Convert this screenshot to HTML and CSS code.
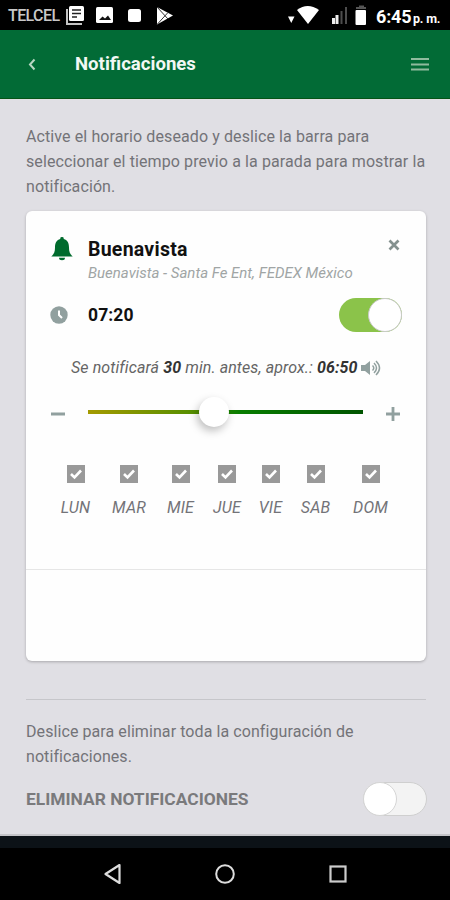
FILE: index.html
```html
<!DOCTYPE html>
<html lang="es">
<head>
<meta charset="utf-8">
<title>Notificaciones</title>
<link rel="stylesheet" href="styles.css">
</head>
<body>
<div class="phone">
  <div class="status">
    <span class="carrier">TELCEL</span>
    <svg class="status-left" width="110" height="30" viewBox="0 0 110 30">
      <path d="M2 9v15h15" fill="none" stroke="#c4c4c4" stroke-width="2"/>
      <rect x="4" y="6" width="15" height="15" rx="1.5" fill="#fff"/>
      <path d="M7 10h9M7 13.5h9M7 17h5" stroke="#222" stroke-width="1.5"/>
      <rect x="31" y="7" width="17" height="16" rx="1.5" fill="#fff"/>
      <path d="M34 20l3.500-3.500 2.500 2 3-3 3 4.500z" fill="#111"/>
      <rect x="63" y="9" width="13" height="13" rx="2.500" fill="#fff"/>
      <path d="M92 7l16 8.500-16 9z" fill="#fff"/>
      <path d="M92 7l11 12M92 24.500l11-12" stroke="#333" stroke-width="1"/>
    </svg>
    <svg class="status-right" width="84" height="30" viewBox="0 0 84 30">
      <path d="M2 16.500h6.500l-3.250 6.500z" fill="#fff"/>
      <path d="M11 10q10.500-8 22 0L22 24z" fill="#fff"/>
      <path d="M47.500 24v-6M51 24v-9" stroke="#eee" stroke-width="3"/>
      <path d="M55.500 24V11M60 24V7" stroke="#4d4d4d" stroke-width="2"/>
      <path d="M70 9V7h3V5.500h5V7h2v2z" fill="#555"/>
      <rect x="69.500" y="10" width="10.500" height="15" rx="1" fill="#fff"/>
    </svg>
    <span class="clock">6:45</span><span class="ampm">p. m.</span>
  </div>
  <header class="bar">
    <svg class="back" width="10" height="14" viewBox="0 0 10 14"><path d="M7.500 2.500L3 7.500 7.500 12.500" fill="none" stroke="#b9d6c3" stroke-width="2"/></svg>
    <h1>Notificaciones</h1>
    <svg class="menu" width="18" height="14" viewBox="0 0 18 14"><path d="M0 2h18M0 7.500h18M0 12.500h18" stroke="#8fbb9d" stroke-width="2"/></svg>
  </header>
  <main>
    <p class="intro">Active el horario deseado y deslice la barra para<br>seleccionar el tiempo previo a la parada para mostrar la<br>notificación.</p>
    <section class="card">
      <div class="stop">
        <svg class="bell" width="22" height="26" viewBox="0 0 22 26"><path d="M11 1a1.700 1.700 0 0 1 1.700 2C17 4 18 8 18 11.500c0 4.500 1 6.500 3.700 9H.3C3 18 4 16 4 11.500 4 8 5 4 9.300 3A1.700 1.700 0 0 1 11 1zM8 21.800h6a3 2.500 0 0 1-6 0z" fill="#006b2d"/></svg>
        <div class="names">
          <h2>Buenavista</h2>
          <div class="route">Buenavista - Santa Fe Ent, FEDEX México</div>
        </div>
        <svg class="close" width="12" height="12" viewBox="0 0 12 12"><path d="M1.500 1.500l9 9M10.500 1.500l-9 9" stroke="#84918f" stroke-width="2.700"/></svg>
      </div>
      <div class="time-row">
        <svg class="time-icon" width="18" height="18" viewBox="0 0 18 18"><circle cx="9" cy="9" r="8.700" fill="#91a09f"/><path d="M9 4.500V9l3 3" fill="none" stroke="#fff" stroke-width="2"/></svg>
        <span class="time">07:20</span>
        <div class="switch on"><i></i></div>
      </div>
      <div class="summary">
        <span>Se notificará <b>30</b> min. antes, aprox.: <b>06:50</b></span>
        <svg width="20" height="16" viewBox="0 0 20 16"><path d="M0 5h4l5-4v14l-5-4H0z" fill="#91a09f"/><path d="M11.500 5.500q2.500 2.500 0 5M13 3q5 5 0 10M15 1q7 7 0 14" fill="none" stroke="#91a09f" stroke-width="1.500"/></svg>
      </div>
      <div class="slider">
        <svg width="14" height="14" viewBox="0 0 14 14"><path d="M0 7h14" stroke="#91a09f" stroke-width="3"/></svg>
        <div class="track"><i class="thumb"></i></div>
        <svg width="14" height="14" viewBox="0 0 14 14"><path d="M0 7h14M7 0v14" stroke="#91a09f" stroke-width="2.800"/></svg>
      </div>
      <div class="days">
        <label><svg class="check" viewBox="0 0 18 18"><path d="M4 9l3.500 3.500L14 5.500"/></svg><span>LUN</span></label>
        <label><svg class="check" viewBox="0 0 18 18"><path d="M4 9l3.500 3.500L14 5.500"/></svg><span>MAR</span></label>
        <label><svg class="check" viewBox="0 0 18 18"><path d="M4 9l3.500 3.500L14 5.500"/></svg><span>MIE</span></label>
        <label><svg class="check" viewBox="0 0 18 18"><path d="M4 9l3.500 3.500L14 5.500"/></svg><span>JUE</span></label>
        <label><svg class="check" viewBox="0 0 18 18"><path d="M4 9l3.500 3.500L14 5.500"/></svg><span>VIE</span></label>
        <label><svg class="check" viewBox="0 0 18 18"><path d="M4 9l3.500 3.500L14 5.500"/></svg><span>SAB</span></label>
        <label><svg class="check" viewBox="0 0 18 18"><path d="M4 9l3.500 3.500L14 5.500"/></svg><span>DOM</span></label>
      </div>
      <div class="card-foot"></div>
    </section>
    <section class="remove">
      <p>Deslice para eliminar toda la configuración de<br>notificaciones.</p>
      <div class="remove-row">
        <strong>ELIMINAR NOTIFICACIONES</strong>
        <div class="switch off"><i></i></div>
      </div>
    </section>
  </main>
  <div class="strip"></div>
  <nav>
    <svg width="18" height="20" viewBox="0 0 18 20"><path d="M16.500 1v18L2.500 10z" fill="none" stroke="#ddd" stroke-width="2.200" stroke-linejoin="round"/></svg>
    <svg width="20" height="20" viewBox="0 0 20 20"><circle cx="10" cy="10" r="8.800" fill="none" stroke="#ddd" stroke-width="2"/></svg>
    <svg width="18" height="18" viewBox="0 0 18 18"><rect x="1.500" y="1.500" width="15" height="15" fill="none" stroke="#ccc" stroke-width="2.200"/></svg>
  </nav>
</div>
</body>
</html>
```
FILE: styles.css
```css
* { box-sizing: border-box; }
body, h1, h2, p { margin: 0; }
body { background: #000; font-family: Roboto, "Liberation Sans", sans-serif; font-size: 16px; color: #737378; }
svg { display: block; flex: none; }
.phone { width: 450px; height: 900px; overflow: hidden; display: flex; flex-direction: column; white-space: nowrap; }

.status { height: 30px; flex: none; display: flex; align-items: center; padding-left: 8px; color: #fff; background: #000; }
.carrier { width: 57px; padding-top: 1px; font-size: 16px; font-weight: 500; letter-spacing: -0.6px; color: #c8c8c8; }
.status-right { margin-left: 111px; }
.clock { margin-left: 6px; width: 37px; padding-top: 3px; font-size: 18px; font-weight: 700; letter-spacing: -0.2px; }
.ampm { padding-top: 7px; font-size: 12.5px; font-weight: 700; letter-spacing: -0.2px; }

.bar { height: 69px; flex: none; display: flex; align-items: center; padding: 0 21px 0 27px; background: #026b36; border-bottom: 1px solid #055417; }
.bar h1 { flex: 1; padding-left: 38px; font-size: 18.6px; font-weight: 700; color: #f2f8f4; }

main { height: 737px; flex: none; padding: 25px 24px 0 26px; background: #e0dfe4; border-bottom: 2px solid #c4c4c8; }
.intro { height: 87px; line-height: 25px; letter-spacing: 0.1px; }
.card { width: 400px; height: 450px; display: flex; flex-direction: column; padding: 26px 24px 0; border-radius: 6px; background: #fefefe; box-shadow: 0 1px 3px rgba(0,0,0,.25); }
.stop { display: flex; height: 60px; }
.bell { margin: -1px 0 0 1px; }
.names { flex: 1; padding-left: 15px; }
.stop h2 { font-size: 19.5px; line-height: 26px; font-weight: 700; letter-spacing: 0.25px; color: #111; }
.route { font-size: 15px; line-height: 20px; font-style: italic; color: #a0a5a5; }
.close { margin: 2px 2px 0 0; }
.time-row { height: 36px; display: flex; align-items: center; }
.time { flex: 1; padding-left: 20px; font-size: 17.5px; letter-spacing: 0.1px; font-weight: 700; color: #111; }
.switch { position: relative; width: 63px; height: 34px; border-radius: 17px; }
.switch i { position: absolute; top: 0; width: 34px; height: 34px; border: 1px solid #c9c9c9; border-radius: 50%; background: #fff; }
.on { background: #8bc34a; }
.on i { right: 0; }
.off { width: 64px; background: #f3f3f3; border: 1px solid #cfcfcf; }
.off i { left: -1px; top: -1px; border-color: #d5d5d5; }
.summary { height: 46px; padding: 24px 0 0 21px; display: flex; align-items: center; font-style: italic; line-height: 20px; letter-spacing: 0.1px; color: #656565; }
.summary b { color: #333; }
.summary svg { margin-left: 3px; }
.slider { display: flex; align-items: center; height: 66px; padding: 0 2px 0 1px; }
.slider svg { margin-top: 4px; }
.track { position: relative; width: 275px; height: 4px; margin: 0 23px; background: linear-gradient(90deg, #a49a00, #528e00 40%, #087d00 55%, #005400); }
.thumb { position: absolute; left: 111px; top: -13px; width: 30px; height: 30px; border-radius: 50%; background: #fff; box-shadow: -2px 4px 9px rgba(0,0,0,.25); }
.days { display: grid; grid-template-columns: 53px 54px 49px 44px 43px 47px 63px; height: 124px; padding-top: 20px; margin-left: -1px; font-style: italic; }
.days label { display: flex; flex-direction: column; align-items: center; gap: 15px; line-height: 20px; letter-spacing: 0.15px; }
.check { width: 18px; height: 18px; background: #999; fill: none; stroke: #fff; stroke-width: 2.6; }
.card-foot { margin: 0 -24px; border-top: 1px solid #e6e6e6; }
.remove { margin-top: 38px; padding-top: 19px; border-top: 1px solid #c6c6ca; line-height: 25px; letter-spacing: 0.08px; }
.remove-row { display: flex; justify-content: space-between; align-items: center; width: 401px; height: 34px; margin-top: 13px; }
.remove-row strong { font-size: 17.4px; letter-spacing: 0; color: #7a7a7c; }
.strip { height: 12px; flex: none; background: #0c1217; }
nav { height: 52px; flex: none; display: flex; align-items: center; justify-content: center; gap: 94px; background: #000; }
```
